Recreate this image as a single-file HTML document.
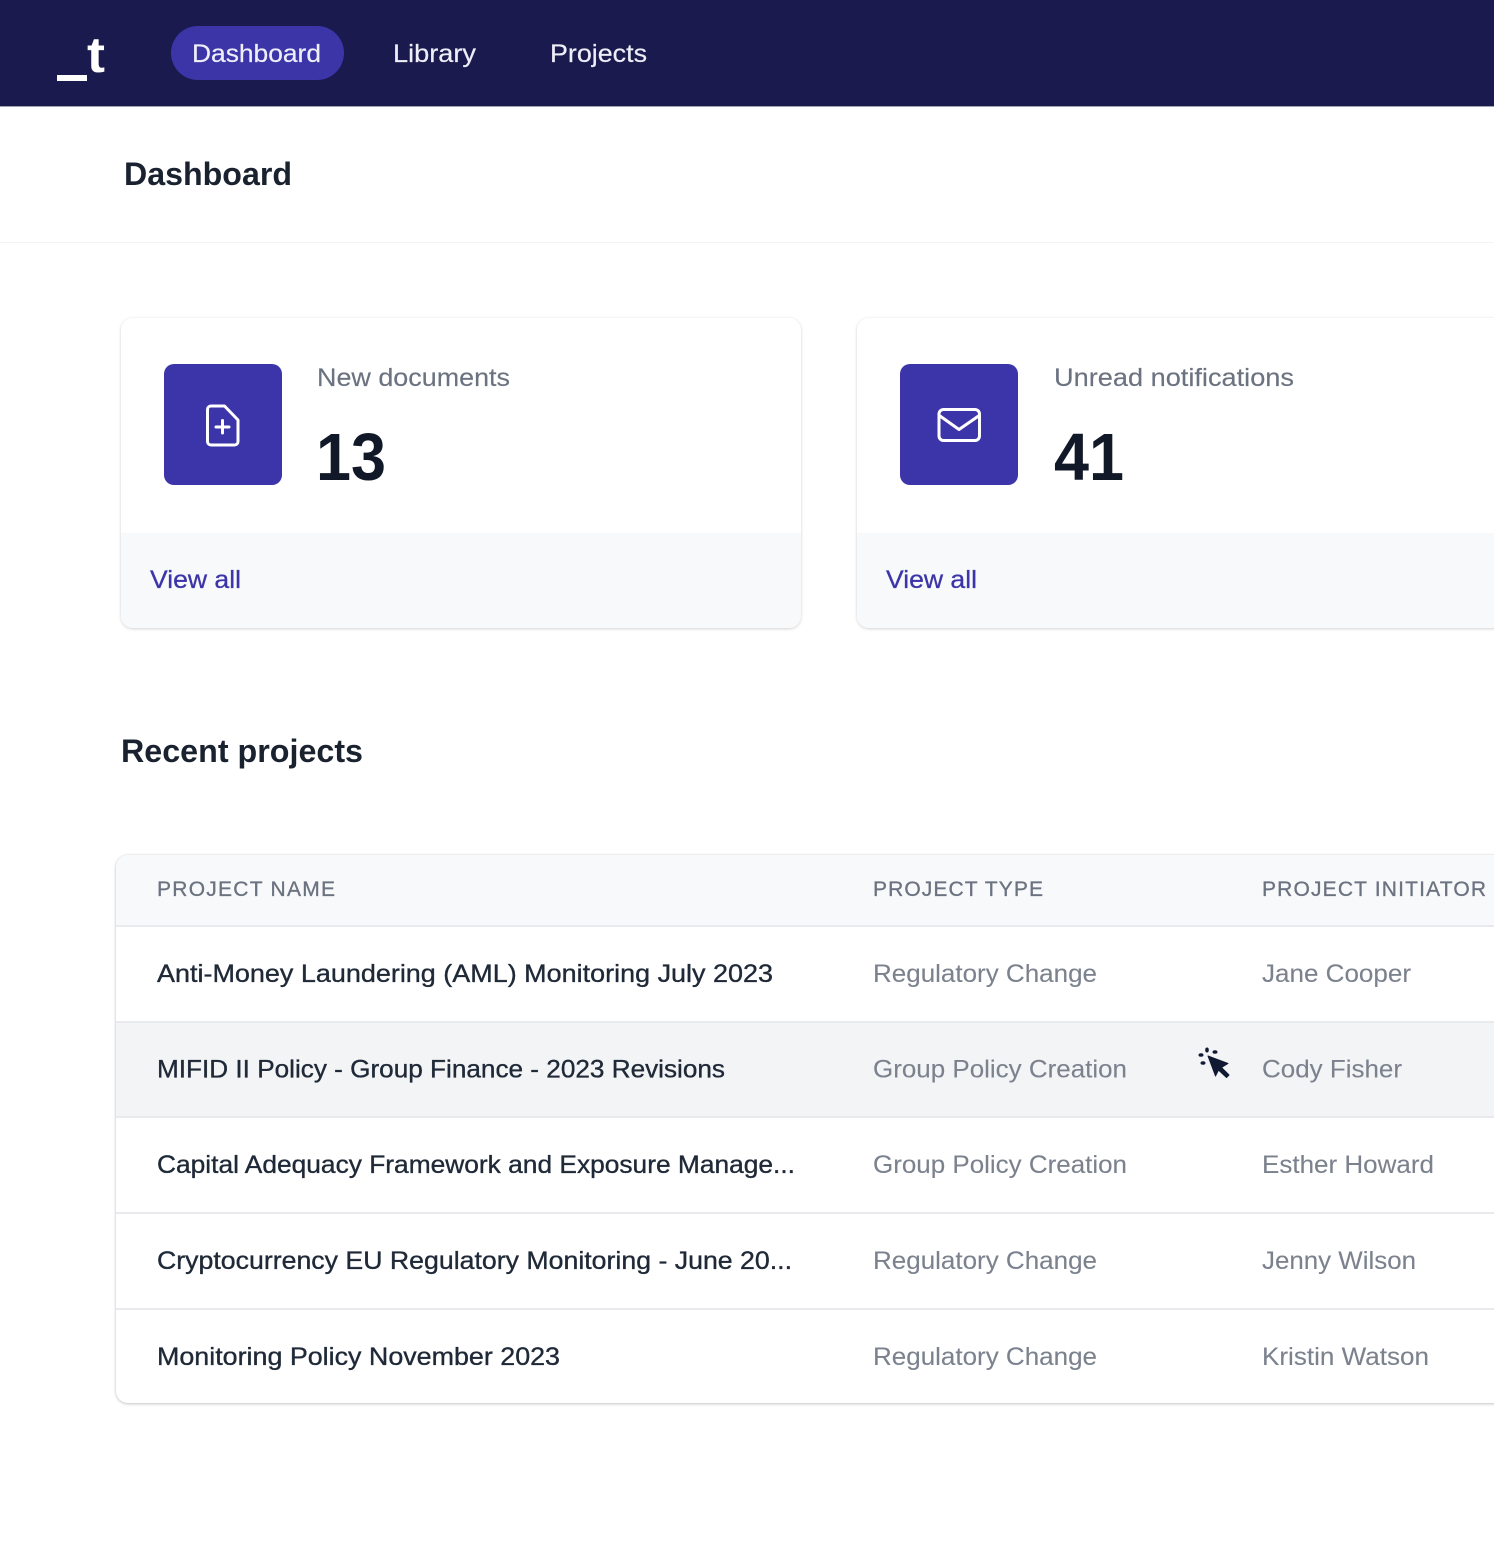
<!DOCTYPE html>
<html lang="en">
<head>
<meta charset="utf-8">
<title>Dashboard</title>
<style>
html,body{margin:0;padding:0;background:#fff}
body{position:relative;width:1494px;height:1552px;overflow:hidden;font-family:"Liberation Sans",sans-serif}
.b{position:absolute;box-sizing:border-box}
svg{position:absolute;left:0;top:0}
text{font-family:"Liberation Sans",sans-serif}
.nav{font-size:25px;fill:#eeeef9;stroke:#eeeef9;stroke-width:.2px}
.h{font-size:32px;font-weight:700;fill:#1a2230}
.lab{font-size:25px;fill:#6b7280;stroke:#6b7280;stroke-width:.15px}
.num{font-size:67px;font-weight:700;fill:#111827}
.link{font-size:25px;fill:#3c35a8;stroke:#3c35a8;stroke-width:.3px}
.th{font-size:21px;fill:#6b7280;stroke:#6b7280;stroke-width:.3px}
.n{font-size:25px;fill:#1f2937;stroke:#1f2937;stroke-width:.35px}
.g{font-size:25px;fill:#7b828e;stroke:#7b828e;stroke-width:.1px}
</style>
</head>
<body>
<div class="b" style="left:0;top:0;width:1494px;height:107px;background:#1a1a4e;border-bottom:1px solid #a3a3b8"></div>
<div class="b" style="left:171px;top:26px;width:173px;height:54px;border-radius:27px;background:#3c35a8"></div>
<div class="b" style="left:0;top:242px;width:1494px;height:1px;background:#f3f4f6"></div>

<div class="b" style="left:121px;top:318px;width:680px;height:310px;border-radius:12px;background:#fff;box-shadow:0 1px 3px rgba(0,0,0,.16),0 0 2px rgba(0,0,0,.04);overflow:hidden">
  <div class="b" style="left:0;top:215px;width:680px;height:95px;background:#f8f9fb"></div>
</div>
<div class="b" style="left:857px;top:318px;width:700px;height:310px;border-radius:12px;background:#fff;box-shadow:0 1px 3px rgba(0,0,0,.16),0 0 2px rgba(0,0,0,.04);overflow:hidden">
  <div class="b" style="left:0;top:215px;width:700px;height:95px;background:#f8f9fb"></div>
</div>
<div class="b" style="left:164px;top:364px;width:118px;height:121px;border-radius:10px;background:#3b35a9"></div>
<div class="b" style="left:900px;top:364px;width:118px;height:121px;border-radius:10px;background:#3b35a9"></div>

<div class="b" style="left:116px;top:855px;width:1420px;height:548px;border-radius:12px;background:#fff;box-shadow:0 1px 3px rgba(0,0,0,.2),0 0 2px rgba(0,0,0,.1);overflow:hidden">
  <div class="b" style="left:0;top:0;width:1420px;height:72px;background:#f8f9fb;border-bottom:2px solid #e9eaee"></div>
  <div class="b" style="left:0;top:166px;width:1420px;height:97px;background:#f3f4f6;border-top:2px solid #e9eaee;border-bottom:2px solid #e9eaee"></div>
  <div class="b" style="left:0;top:357px;width:1420px;height:2px;background:#e9eaee"></div>
  <div class="b" style="left:0;top:453px;width:1420px;height:2px;background:#e9eaee"></div>
</div>

<svg width="1494" height="1552" viewBox="0 0 1494 1552" xmlns="http://www.w3.org/2000/svg">
  <rect x="57" y="75" width="30" height="6" fill="#fff"/>
  <text x="87" y="72" font-size="50" font-weight="700" fill="#fff" textLength="18" lengthAdjust="spacingAndGlyphs">t</text>

  <text class="nav" x="192" y="62" textLength="129" lengthAdjust="spacingAndGlyphs">Dashboard</text>
  <text class="nav" x="393" y="62" textLength="83" lengthAdjust="spacingAndGlyphs">Library</text>
  <text class="nav" x="550" y="62" textLength="97" lengthAdjust="spacingAndGlyphs">Projects</text>

  <text class="h" x="124" y="185" textLength="168" lengthAdjust="spacingAndGlyphs">Dashboard</text>

  <text class="lab" x="317" y="386" textLength="193" lengthAdjust="spacingAndGlyphs">New documents</text>
  <text class="num" x="316" y="480" textLength="70" lengthAdjust="spacingAndGlyphs">13</text>
  <text class="link" x="150" y="588" textLength="91" lengthAdjust="spacingAndGlyphs">View all</text>

  <text class="lab" x="1054" y="386" textLength="240" lengthAdjust="spacingAndGlyphs">Unread notifications</text>
  <text class="num" x="1054" y="480" textLength="70" lengthAdjust="spacingAndGlyphs">41</text>
  <text class="link" x="886" y="588" textLength="91" lengthAdjust="spacingAndGlyphs">View all</text>

  <g fill="none" stroke="#fff" stroke-width="3" stroke-linecap="round" stroke-linejoin="round">
    <path d="M211 406H224.500L238 420V441.500A3.500 3.500 0 0 1 234.500 445H211A3.500 3.500 0 0 1 207.500 441.500V409.500A3.500 3.500 0 0 1 211 406Z"/>
    <path d="M222.500 420.500V433M216 427H229"/>
    <rect x="939" y="409.500" width="40.500" height="31" rx="4.500"/>
    <path d="M940 416L959 429.500L978.500 416"/>
  </g>

  <text class="h" x="121" y="762" textLength="242" lengthAdjust="spacingAndGlyphs">Recent projects</text>

  <text class="th" x="157" y="896" textLength="178">PROJECT NAME</text>
  <text class="th" x="873" y="896" textLength="170">PROJECT TYPE</text>
  <text class="th" x="1262" y="896" textLength="224">PROJECT INITIATOR</text>

  <text class="n" x="157" y="982" textLength="616" lengthAdjust="spacingAndGlyphs">Anti-Money Laundering (AML) Monitoring July 2023</text>
  <text class="g" x="873" y="982" textLength="224" lengthAdjust="spacingAndGlyphs">Regulatory Change</text>
  <text class="g" x="1262" y="982" textLength="149" lengthAdjust="spacingAndGlyphs">Jane Cooper</text>

  <text class="n" x="157" y="1077.500" textLength="568" lengthAdjust="spacingAndGlyphs">MIFID II Policy - Group Finance - 2023 Revisions</text>
  <text class="g" x="873" y="1077.500" textLength="254" lengthAdjust="spacingAndGlyphs">Group Policy Creation</text>
  <text class="g" x="1262" y="1077.500" textLength="140" lengthAdjust="spacingAndGlyphs">Cody Fisher</text>

  <text class="n" x="157" y="1173" textLength="638" lengthAdjust="spacingAndGlyphs">Capital Adequacy Framework and Exposure Manage...</text>
  <text class="g" x="873" y="1173" textLength="254" lengthAdjust="spacingAndGlyphs">Group Policy Creation</text>
  <text class="g" x="1262" y="1173" textLength="172" lengthAdjust="spacingAndGlyphs">Esther Howard</text>

  <text class="n" x="157" y="1269" textLength="635" lengthAdjust="spacingAndGlyphs">Cryptocurrency EU Regulatory Monitoring - June 20...</text>
  <text class="g" x="873" y="1269" textLength="224" lengthAdjust="spacingAndGlyphs">Regulatory Change</text>
  <text class="g" x="1262" y="1269" textLength="154" lengthAdjust="spacingAndGlyphs">Jenny Wilson</text>

  <text class="n" x="157" y="1365" textLength="403" lengthAdjust="spacingAndGlyphs">Monitoring Policy November 2023</text>
  <text class="g" x="873" y="1365" textLength="224" lengthAdjust="spacingAndGlyphs">Regulatory Change</text>
  <text class="g" x="1262" y="1365" textLength="167" lengthAdjust="spacingAndGlyphs">Kristin Watson</text>

  <g fill="#111a33" stroke="#111a33" stroke-width="1" stroke-linejoin="round">
    <path d="M1208 1056L1228 1063.500L1221.500 1067.500L1229 1075L1226.500 1077.500L1218.500 1070L1215.500 1076Z"/>
    <ellipse cx="1207" cy="1050" rx="1.300" ry="2"/>
    <ellipse cx="1215" cy="1052" rx="2" ry="1.300"/>
    <ellipse cx="1201" cy="1055" rx="2" ry="1.300"/>
    <ellipse cx="1203" cy="1063" rx="2" ry="1.300"/>
  </g>
</svg>
</body>
</html>
